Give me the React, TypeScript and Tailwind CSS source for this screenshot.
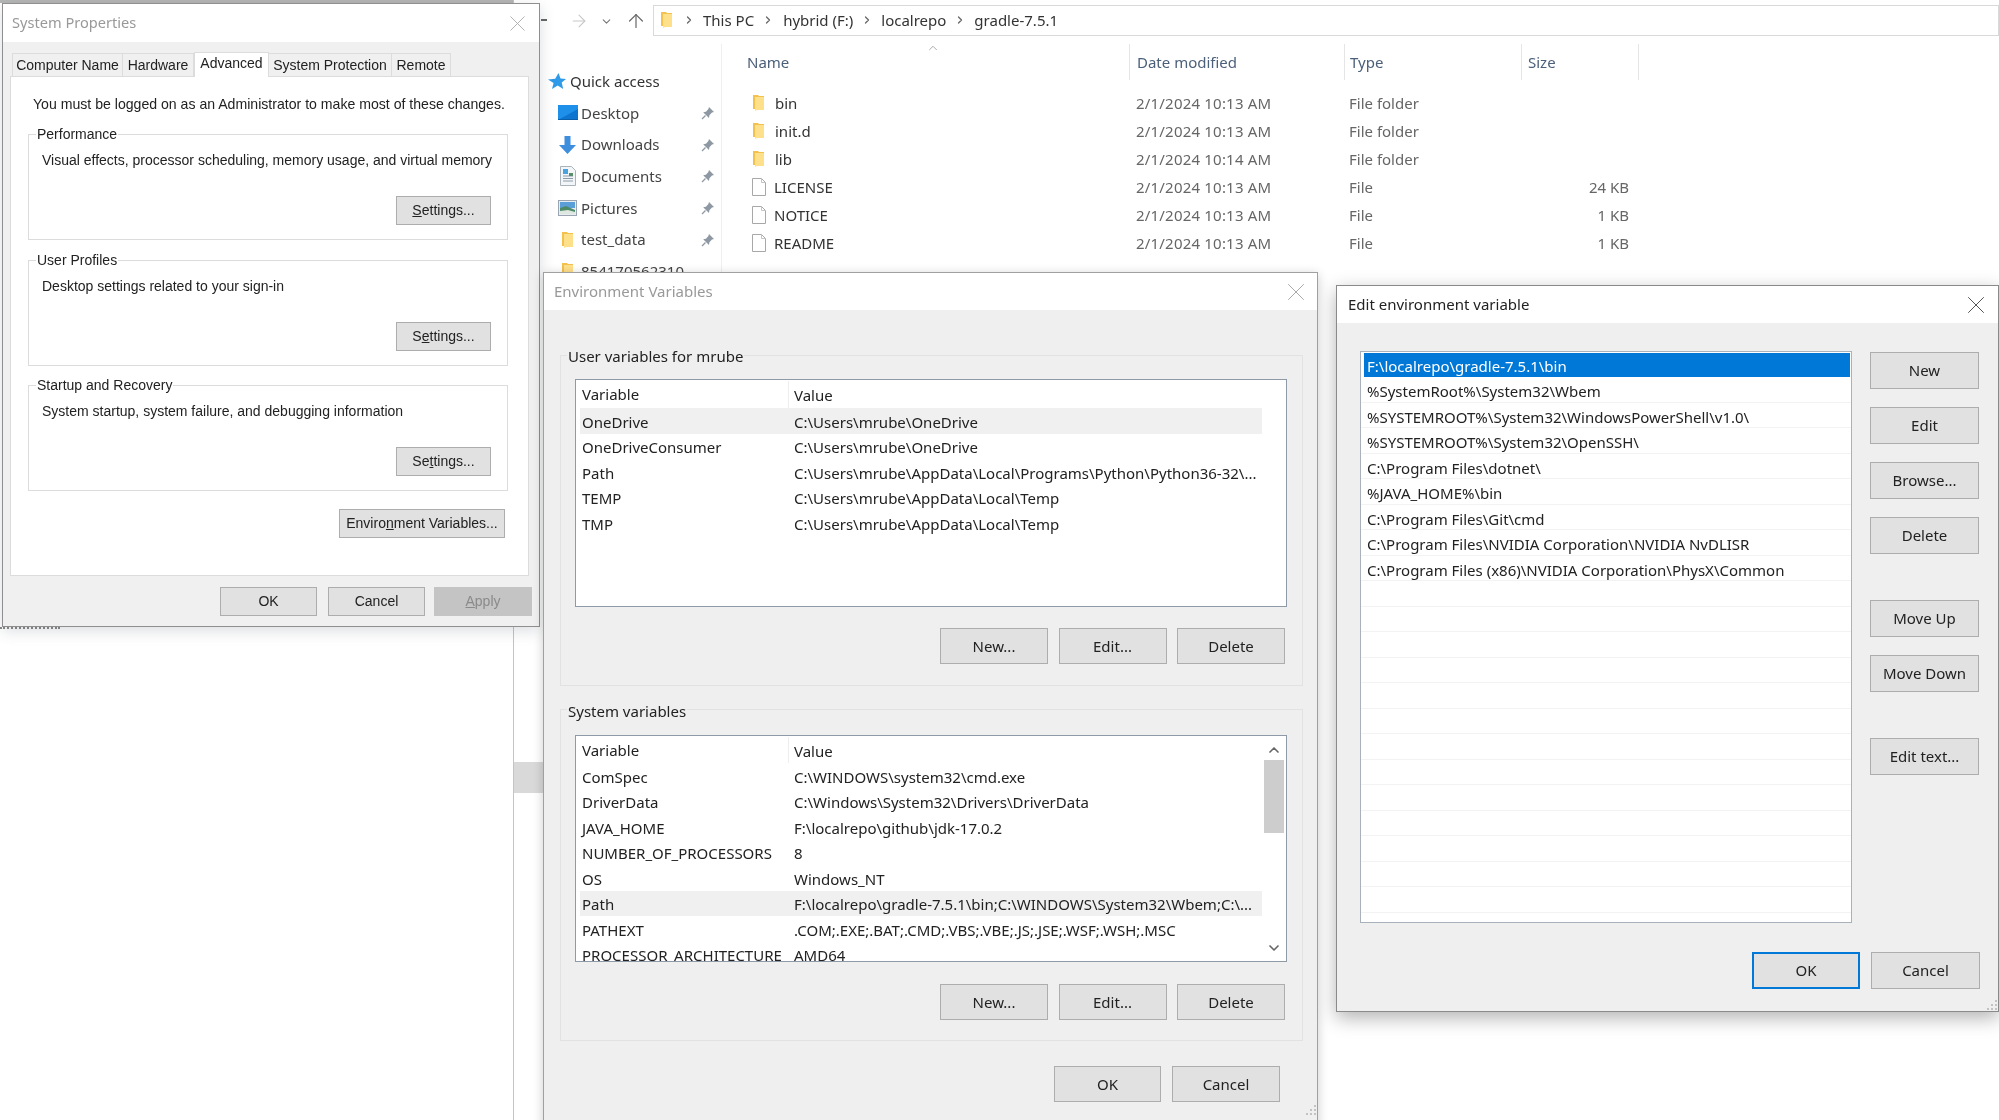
import type { ReactNode } from 'react';
import { ArrowRight, ArrowUp, ChevronDown, ChevronRight, ChevronUp, X } from 'lucide-react';

function Btn({ className, children, tone = 'plain' }: { className: string; children: ReactNode; tone?: 'plain' | 'off' | 'focus' }) {
  const look =
    tone === 'off'
      ? 'border border-[#c4c4c4] bg-[#c4c4c4] text-[#8a8a8a]'
      : tone === 'focus'
        ? 'border-2 border-[#0078d7] bg-[#e1e1e1] text-[#222]'
        : 'border border-[#adadad] bg-[#e1e1e1] text-[#222]';
  return <div className={`flex items-center justify-center whitespace-nowrap ${look} ${className}`}>{children}</div>;
}

function FolderIcon() {
  return (
    <svg width="13" height="18" viewBox="0 0 13 18" className="shrink-0">
      <path d="M1 1h5l1 1h5v13H1z" fill="#f2c14e" />
      <path d="M3 3h9v13H5l-2 1z" fill="#ffe08a" />
    </svg>
  );
}

function FileIcon() {
  return (
    <svg width="14" height="18" viewBox="0 0 14 18" className="shrink-0">
      <path d="M.5.5h9l4 4v13H.5z" fill="#fff" stroke="#a8a8a8" />
      <path d="M9.5.5v4h4" fill="none" stroke="#c4c4c4" />
    </svg>
  );
}

function PinIcon() {
  return (
    <svg width="14" height="14" viewBox="0 0 14 14" className="shrink-0">
      <path d="M8 1l5 5-2 .6-2.6 2.6-.4 2.8L2.200 6.200 5 5.800 7.400 3z" fill="#8d98a3" />
      <path d="M4.500 9.500L1 13" stroke="#8d98a3" strokeWidth="1.300" />
    </svg>
  );
}

function StarIcon() {
  return (
    <svg width="18" height="17" viewBox="0 0 18 17" className="shrink-0">
      <path d="M10.500 0l2 5.600 5.500.3-4.300 3.500 1.500 6.600-5.500-3.400L4 16l1.600-6L0 6.400l7.200-.6z" fill="#2f9be8" />
    </svg>
  );
}

function DesktopIcon() {
  return (
    <svg width="20" height="15" viewBox="0 0 20 15" className="shrink-0">
      <rect width="20" height="15" fill="#1e90ea" />
      <path d="M0 15L20 4v11z" fill="#0d74cf" />
      <rect y="14" width="20" height="1" fill="#0b5fa8" />
    </svg>
  );
}

function DownloadIcon() {
  return (
    <svg width="17" height="18" viewBox="0 0 17 18" className="shrink-0">
      <path d="M5.500 0h6v9H17l-8.500 9L0 9h5.500z" fill="#3e8ede" />
    </svg>
  );
}

function DocumentIcon() {
  return (
    <svg width="16" height="20" viewBox="0 0 16 20" className="shrink-0">
      <path d="M.5.500h11l4 4v15H.500z" fill="#f3f6f9" stroke="#aab2ba" />
      <rect x="3" y="3" width="5" height="5" fill="#4aa3df" />
      <path d="M3 10h10M3 12.500h10M3 15h10" stroke="#8c9aa8" />
      <rect x="9" y="7" width="4" height="3" fill="#5b8f6b" />
    </svg>
  );
}

function PictureIcon() {
  return (
    <svg width="19" height="16" viewBox="0 0 19 16" className="shrink-0">
      <rect x=".5" y=".5" width="18" height="15" fill="#e8edf2" stroke="#9aa5b1" />
      <rect x="2" y="2" width="15" height="6" fill="#5a9fd8" />
      <path d="M2 8l6-2 9 4v4H2z" fill="#4d8a6a" />
      <path d="M2 11l8-1 7 2v2H2z" fill="#dfe8e0" />
    </svg>
  );
}

const quickAccess = [
  { icon: <DesktopIcon />, label: 'Desktop', pin: true },
  { icon: <DownloadIcon />, label: 'Downloads', pin: true },
  { icon: <DocumentIcon />, label: 'Documents', pin: true },
  { icon: <PictureIcon />, label: 'Pictures', pin: true },
  { icon: <FolderIcon />, label: 'test_data', pin: true },
  { icon: <FolderIcon />, label: '854170562310', pin: false },
];

const files = [
  { name: 'bin', date: '2/1/2024 10:13 AM', type: 'File folder', size: '', folder: true },
  { name: 'init.d', date: '2/1/2024 10:13 AM', type: 'File folder', size: '', folder: true },
  { name: 'lib', date: '2/1/2024 10:14 AM', type: 'File folder', size: '', folder: true },
  { name: 'LICENSE', date: '2/1/2024 10:13 AM', type: 'File', size: '24 KB', folder: false },
  { name: 'NOTICE', date: '2/1/2024 10:13 AM', type: 'File', size: '1 KB', folder: false },
  { name: 'README', date: '2/1/2024 10:13 AM', type: 'File', size: '1 KB', folder: false },
];

const crumbs = ['This PC', 'hybrid (F:)', 'localrepo', 'gradle-7.5.1'];

function Explorer() {
  return (
    <div className="absolute inset-y-0 left-[513px] right-0 border-l border-[#c4c4c4] bg-white">
      <div className="flex h-[44px] items-start">
        <div className="ml-[27px] mt-[19px] h-[2px] w-[6px] bg-[#666]" />
        <ArrowRight className="ml-[22px] mt-[11px] text-[#c8c8c8]" size={20} strokeWidth={1.3} />
        <ChevronDown className="ml-[11px] mt-[15px] text-[#777]" size={13} strokeWidth={2} />
        <ArrowUp className="ml-[12px] mt-[10px] text-[#666]" size={22} strokeWidth={1.3} />
        <div className="ml-[6px] mt-[5px] flex h-[31px] flex-1 items-center border border-[#d9d9d9] pb-[1px] pl-[6px] text-[#333]">
          <FolderIcon />
          <ChevronRight className="ml-[10px] text-[#666]" size={12} strokeWidth={2.5} />
          {crumbs.map((c, i) => (
            <div key={c} className="flex items-center">
              {i > 0 && <ChevronRight className={i === 1 ? 'ml-[8px] mr-[9px] text-[#666]' : 'mx-[8px] text-[#666]'} size={12} strokeWidth={2.5} />}
              <span className={i === 0 ? 'ml-[8px]' : ''}>{c}</span>
            </div>
          ))}
        </div>
      </div>
      <div className="flex">
        <div className="h-[1076px] w-[208px] border-r border-[#efefef]">
          <div className="mt-[21px] flex h-[32px] items-center pl-[34px]">
            <StarIcon />
            <span className="ml-[4px] text-[#333]">Quick access</span>
          </div>
          {quickAccess.map((q) => (
            <div key={q.label} className="flex h-[31.7px] items-center text-[#444]">
              <div className="ml-[40px] flex w-[27px] justify-center">{q.icon}</div>
              <span className="w-[120px]">{q.label}</span>
              {q.pin && <PinIcon />}
            </div>
          ))}
          <div className="mt-[475px] h-[31px] w-[30px] bg-[#d9d9d9]" />
        </div>
        <div className="flex-1">
          <div className="flex h-[36px] items-center text-[#4c607a]">
            <div className="relative h-full w-[407px] pl-[25px] leading-[36px]">
              Name
              <ChevronUp className="absolute left-[204px] top-[-3px] text-[#888]" size={14} strokeWidth={1.2} />
            </div>
            <div className="h-full w-[215px] border-l border-[#e5e5e5] pl-[7px] leading-[36px]">Date modified</div>
            <div className="h-full w-[177px] border-l border-[#e5e5e5] pl-[5px] leading-[36px]">Type</div>
            <div className="h-full w-[118px] border-x border-[#e5e5e5] pl-[6px] leading-[36px]">Size</div>
          </div>
          <div className="mt-[9px]">
            {files.map((f) => (
              <div key={f.name} className="flex h-[28px] items-center text-[#666]">
                <div className="flex w-[407px] items-center pl-[30px]">
                  {f.folder ? <FolderIcon /> : <FileIcon />}
                  <span className={f.folder ? 'ml-[10px] text-[#333]' : 'ml-[8px] text-[#333]'}>{f.name}</span>
                </div>
                <div className="w-[215px] pl-[7px] tracking-[0.2px]">{f.date}</div>
                <div className="w-[177px] pl-[5px]">{f.type}</div>
                <div className="w-[108px] text-right">{f.size}</div>
              </div>
            ))}
          </div>
        </div>
      </div>
    </div>
  );
}

function GroupBox({ label, desc, mnemonic, className }: { label: string; desc: string; mnemonic: ReactNode; className: string }) {
  return (
    <div className={`ml-[17px] h-[106px] w-[480px] border border-[#dcdcdc] ${className}`}>
      <div className="-mt-[11px] ml-[7px] w-fit bg-white px-[1px] leading-[20px]">{label}</div>
      <div className="ml-[13px] mt-[6px] leading-[20px]">{desc}</div>
      <Btn className="ml-[367px] mt-[26px] h-[29px] w-[95px]">{mnemonic}</Btn>
    </div>
  );
}

const tabs = [
  { label: 'Computer Name', w: 'w-[111px]', active: false },
  { label: 'Hardware', w: 'w-[71px]', active: false },
  { label: 'Advanced', w: 'w-[75px]', active: true },
  { label: 'System Protection', w: 'w-[123px]', active: false },
  { label: 'Remote', w: 'w-[59px]', active: false },
];

function SystemProperties() {
  return (
    <div className="absolute left-[2px] top-[3px] h-[624px] w-[538px] whitespace-nowrap border border-[#8f8f8f] bg-[#f0f0f0] font-['Liberation_Sans',sans-serif] text-[14px] text-[#222] shadow-[0_4px_14px_rgba(60,70,90,0.18)]">
      <div className="flex h-[38px] items-center justify-between bg-white pl-[9px] pr-[8px] font-['Noto_Sans',sans-serif] text-[14.6px] text-[#999]">
        <span>System Properties</span>
        <X size={27} strokeWidth={0.8} className="text-[#aaa]" />
      </div>
      <div className="ml-[9px] mt-[11px] flex h-[23px] items-end">
        {tabs.map((t) => (
          <div
            key={t.label}
            className={
              t.active
                ? `${t.w} relative z-10 -mb-[1px] flex h-[25px] items-center justify-center border-x border-t border-[#dcdcdc] bg-white pb-[3px]`
                : `${t.w} flex h-[23px] items-center justify-center border-r border-t border-[#dcdcdc] first:border-l`
            }
          >
            {t.label}
          </div>
        ))}
      </div>
      <div className="ml-[7px] h-[500px] w-[519px] border border-[#dcdcdc] bg-white">
        <div className="pl-[22px] pt-[17px] text-[14.1px] leading-[20px]">You must be logged on as an Administrator to make most of these changes.</div>
        <div className="h-[20px]" />
        <GroupBox
          label="Performance"
          desc="Visual effects, processor scheduling, memory usage, and virtual memory"
          mnemonic={<span><u>S</u>ettings...</span>}
          className=""
        />
        <GroupBox
          label="User Profiles"
          desc="Desktop settings related to your sign-in"
          mnemonic={<span>S<u>e</u>ttings...</span>}
          className="mt-[20px]"
        />
        <GroupBox
          label="Startup and Recovery"
          desc="System startup, system failure, and debugging information"
          mnemonic={<span>Se<u>t</u>tings...</span>}
          className="mt-[19px]"
        />
        <Btn className="ml-[328px] mt-[18px] h-[29px] w-[166px]">
          <span>Enviro<u>n</u>ment Variables...</span>
        </Btn>
      </div>
      <div className="mt-[11px] flex">
        <Btn className="ml-[217px] h-[29px] w-[97px]">OK</Btn>
        <Btn className="ml-[11px] h-[29px] w-[97px]">Cancel</Btn>
        <Btn tone="off" className="ml-[9px] h-[29px] w-[98px]">
          <span><u>A</u>pply</span>
        </Btn>
      </div>
    </div>
  );
}

function VarRow({ name, value, selected }: { name: string; value: string; selected?: boolean }) {
  return (
    <div className={`flex h-[25.5px] w-[682px] items-center overflow-hidden whitespace-nowrap pl-[2px] pt-[2px] ${selected ? 'bg-[#f0f0f0]' : ''}`}>
      <span className="w-[212px]">{name}</span>
      <span>{value}</span>
    </div>
  );
}

function VarHeader({ className }: { className: string }) {
  return (
    <div className={`flex w-[682px] items-center pl-[2px] ${className}`}>
      <span className="w-[206px]">Variable</span>
      <span className="h-full border-l border-[#eeeeee] pl-[5px] leading-[28px]">Value</span>
    </div>
  );
}

const userVars = [
  { name: 'OneDrive', value: 'C:\\Users\\mrube\\OneDrive', selected: true },
  { name: 'OneDriveConsumer', value: 'C:\\Users\\mrube\\OneDrive' },
  { name: 'Path', value: 'C:\\Users\\mrube\\AppData\\Local\\Programs\\Python\\Python36-32\\...' },
  { name: 'TEMP', value: 'C:\\Users\\mrube\\AppData\\Local\\Temp' },
  { name: 'TMP', value: 'C:\\Users\\mrube\\AppData\\Local\\Temp' },
];

const systemVars = [
  { name: 'ComSpec', value: 'C:\\WINDOWS\\system32\\cmd.exe' },
  { name: 'DriverData', value: 'C:\\Windows\\System32\\Drivers\\DriverData' },
  { name: 'JAVA_HOME', value: 'F:\\localrepo\\github\\jdk-17.0.2' },
  { name: 'NUMBER_OF_PROCESSORS', value: '8' },
  { name: 'OS', value: 'Windows_NT' },
  { name: 'Path', value: 'F:\\localrepo\\gradle-7.5.1\\bin;C:\\WINDOWS\\System32\\Wbem;C:\\...', selected: true },
  { name: 'PATHEXT', value: '.COM;.EXE;.BAT;.CMD;.VBS;.VBE;.JS;.JSE;.WSF;.WSH;.MSC' },
  { name: 'PROCESSOR_ARCHITECTURE', value: 'AMD64' },
];

function ResizeGrip({ className }: { className: string }) {
  return (
    <svg width="12" height="12" viewBox="0 0 12 12" className={className}>
      <path d="M9 1h2v2H9zM5 5h2v2H5zM9 5h2v2H9zM1 9h2v2H1zM5 9h2v2H5zM9 9h2v2H9z" fill="#c2c2c2" />
    </svg>
  );
}

function EnvButtons() {
  return (
    <div className="ml-[379px] flex gap-[10.500px]">
      <Btn className="h-[36px] w-[108px]">New...</Btn>
      <Btn className="h-[36px] w-[108px]">Edit...</Btn>
      <Btn className="h-[36px] w-[108px]">Delete</Btn>
    </div>
  );
}

function EnvironmentVariables() {
  return (
    <div className="absolute left-[543px] top-[272px] h-[860px] w-[775px] border border-[#a0a0a0] bg-[#efefef] text-[#222] shadow-[0_2px_10px_rgba(0,0,0,0.2)]">
      <div className="flex h-[37px] items-center justify-between bg-white pl-[10px] pr-[6px] text-[#999]">
        <span>Environment Variables</span>
        <X size={30} strokeWidth={0.8} className="text-[#aaa]" />
      </div>
      <div className="ml-[16px] mt-[45px] h-[331px] w-[743px] border border-[#e2e2e2]">
        <div className="-mt-[10px] ml-[6px] w-fit bg-[#efefef] px-[1px] leading-[20px]">User variables for mrube</div>
        <div className="ml-[14px] mt-[13px] h-[228px] w-[712px] border border-[#8e9aa8] bg-white pl-[4px]">
          <VarHeader className="h-[28px] pt-[1px]" />
          {userVars.map((v) => (
            <VarRow key={v.name} {...v} />
          ))}
        </div>
        <div className="mt-[21px]">
          <EnvButtons />
        </div>
      </div>
      <div className="ml-[16px] mt-[23px] h-[332px] w-[743px] border border-[#e2e2e2]">
        <div className="-mt-[9px] ml-[6px] w-fit bg-[#efefef] px-[1px] leading-[20px]">System variables</div>
        <div className="ml-[14px] mt-[14px] flex h-[227px] w-[712px] overflow-hidden border border-[#8e9aa8] bg-white pl-[4px]">
          <div className="w-[682px] shrink-0">
            <VarHeader className="h-[27px] pt-[1px]" />
            {systemVars.map((v) => (
              <VarRow key={v.name} {...v} />
            ))}
          </div>
          <div className="flex w-[24px] flex-col items-center pt-[6px]">
            <ChevronUp size={16} strokeWidth={2.500} className="text-[#666]" />
            <div className="mt-[2px] h-[73px] w-[20px] bg-[#cdcdcd]" />
            <ChevronDown size={16} strokeWidth={2.500} className="mt-[107px] text-[#666]" />
          </div>
        </div>
        <div className="mt-[22px]">
          <EnvButtons />
        </div>
      </div>
      <div className="mt-[25px] flex">
        <Btn className="ml-[510px] h-[36px] w-[107px]">OK</Btn>
        <Btn className="ml-[11px] h-[36px] w-[108px]">Cancel</Btn>
      </div>
      <ResizeGrip className="absolute left-[761px] top-[831px]" />
    </div>
  );
}

const pathEntries = [
  'F:\\localrepo\\gradle-7.5.1\\bin',
  '%SystemRoot%\\System32\\Wbem',
  '%SYSTEMROOT%\\System32\\WindowsPowerShell\\v1.0\\',
  '%SYSTEMROOT%\\System32\\OpenSSH\\',
  'C:\\Program Files\\dotnet\\',
  '%JAVA_HOME%\\bin',
  'C:\\Program Files\\Git\\cmd',
  'C:\\Program Files\\NVIDIA Corporation\\NVIDIA NvDLISR',
  'C:\\Program Files (x86)\\NVIDIA Corporation\\PhysX\\Common',
  ...Array.from({ length: 13 }, () => ''),
];

const sideButtons = [
  { label: 'New', mt: 'mt-0' },
  { label: 'Edit', mt: 'mt-[18px]' },
  { label: 'Browse...', mt: 'mt-[18px]' },
  { label: 'Delete', mt: 'mt-[18px]' },
  { label: 'Move Up', mt: 'mt-[46px]' },
  { label: 'Move Down', mt: 'mt-[18px]' },
  { label: 'Edit text...', mt: 'mt-[46px]' },
];

function EditVariable() {
  return (
    <div className="absolute left-[1336px] top-[285px] h-[727px] w-[663px] border border-[#8a8a8a] bg-[#efefef] text-[#222] shadow-[0_6px_18px_rgba(0,0,0,0.3)]">
      <div className="flex h-[37px] items-center justify-between bg-white pl-[11px] pr-[7px]">
        <span>Edit environment variable</span>
        <X size={30} strokeWidth={0.8} className="text-[#555]" />
      </div>
      <div className="flex pt-[28px]">
        <div className="ml-[23px] h-[572px] w-[492px] overflow-hidden border border-[#a9b1ba] bg-white">
          {pathEntries.map((p, i) => (
            <div
              key={i}
              className={
                i === 0
                  ? 'ml-[3px] mr-[1px] mt-[1px] flex h-[24px] items-center bg-[#0078d7] pl-[3px] pt-[2px] text-white'
                  : 'flex h-[25.500px] items-center border-b border-[#f3f3f3] pl-[6px] pt-[4px]'
              }
            >
              {p}
            </div>
          ))}
        </div>
        <div className="ml-[18px] w-[109px] pt-[1px]">
          {sideButtons.map((b) => (
            <Btn key={b.label} className={`h-[37px] w-[109px] ${b.mt}`}>{b.label}</Btn>
          ))}
        </div>
      </div>
      <div className="mt-[29px] flex">
        <Btn tone="focus" className="ml-[415px] h-[37px] w-[108px]">OK</Btn>
        <Btn className="ml-[11px] h-[37px] w-[109px]">Cancel</Btn>
      </div>
      <ResizeGrip className="absolute left-[649px] top-[713px]" />
    </div>
  );
}

export default function App() {
  return (
    <div className="relative h-[1120px] w-[1999px] overflow-hidden bg-white font-['Noto_Sans',sans-serif] text-[15px] blur-[0.35px]">
      <div className="h-[3px] w-[513px] bg-[#b5b5b5]" />
      <Explorer />
      <div className="absolute left-0 top-[627px] h-[2px] w-[60px] border-t-2 border-dotted border-[#888]" />
      <SystemProperties />
      <EnvironmentVariables />
      <EditVariable />
    </div>
  );
}
